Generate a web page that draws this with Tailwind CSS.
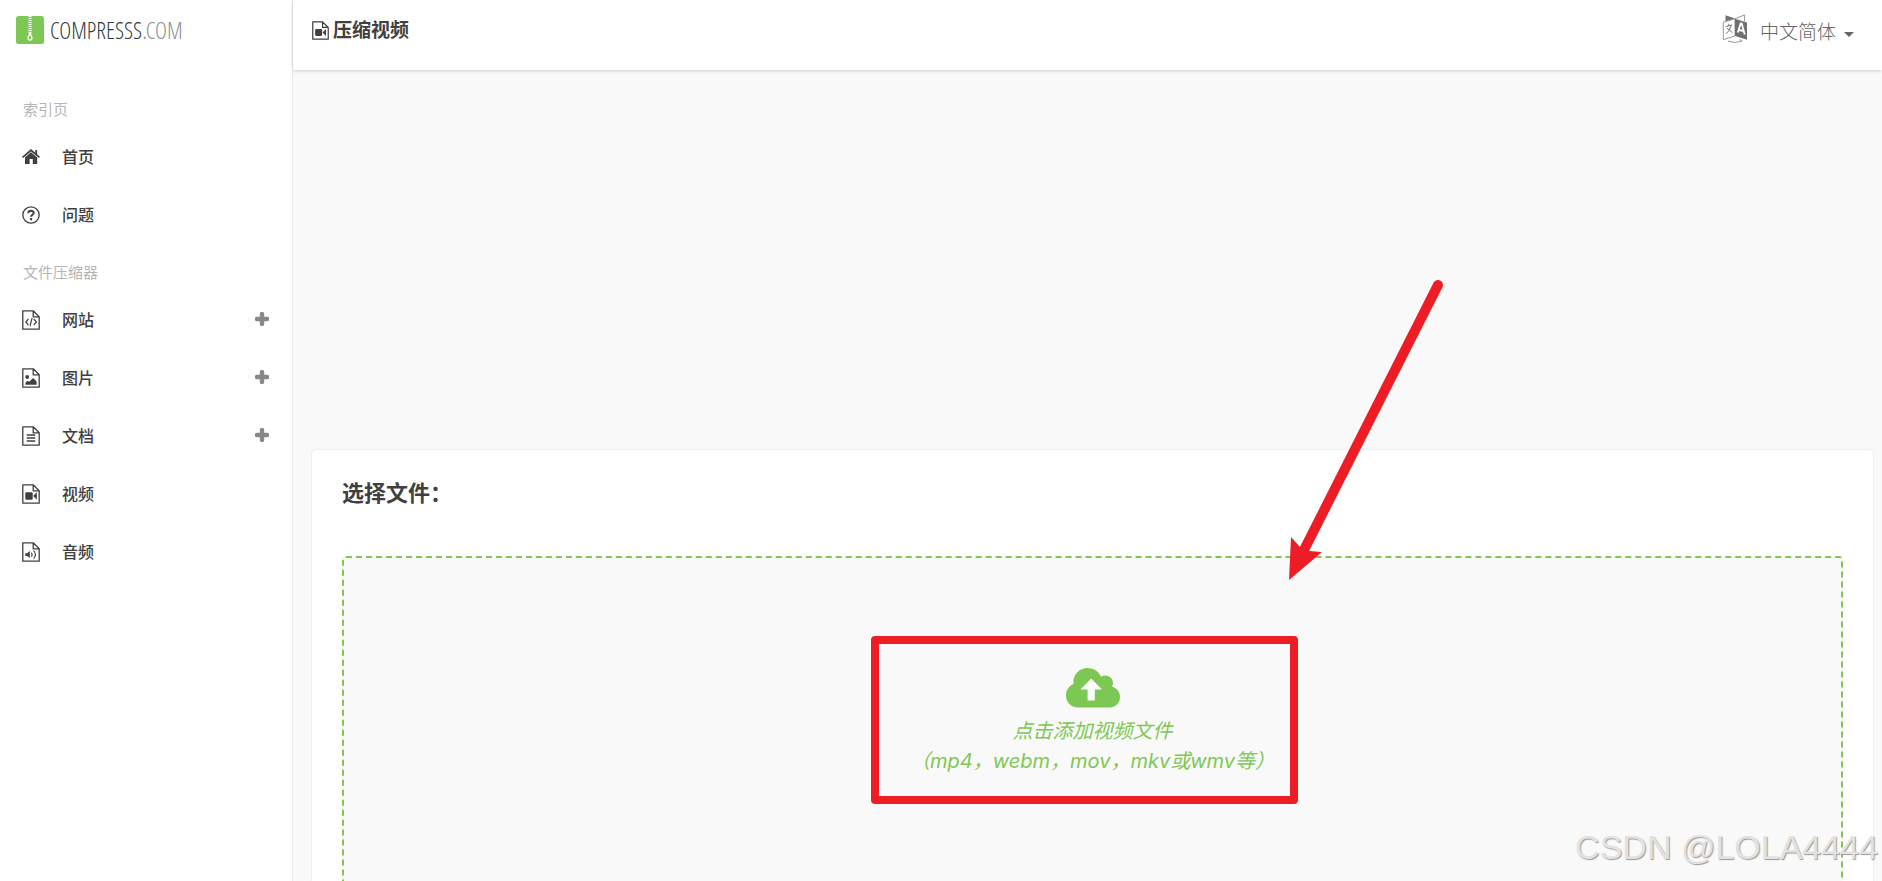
<!DOCTYPE html>
<html lang="zh-CN">
  <head>
    <meta charset="UTF-8" />
    <meta name="viewport" content="width=device-width, initial-scale=1.0" />
    <title>压缩视频 - Compresss.com</title>
    <script src="https://cdn.jsdelivr.net/npm/@tailwindcss/browser@4"></script>
  </head>
  <body class="relative flex h-screen overflow-hidden bg-[#f9f9f9] font-['Noto_Sans','Noto_Sans_CJK_SC',sans-serif] text-[#404040]">
    <!-- Shared icon shapes -->
    <svg class="hidden">
      <symbol id="file" viewBox="0 0 18 20">
        <path d="M.8.8h10.4l6 6v12.4H.8z M11.2.8v6h6" fill="none" stroke="currentColor" stroke-width="1.3" stroke-linejoin="round" />
      </symbol>
      <symbol id="video" viewBox="0 0 18 20">
        <use href="#file" width="18" height="20" />
        <rect x="3.3" y="8.3" width="7.4" height="7.4" rx="1.2" fill="currentColor" />
        <path d="M11.2 12l3.6-3.7v7.4z" fill="currentColor" />
      </symbol>
      <symbol id="plus" viewBox="0 0 14 14">
        <path d="M7 2v10M2 7h10" stroke="currentColor" stroke-width="4.4" stroke-linecap="round" />
      </symbol>
    </svg>

    <!-- Sidebar -->
    <aside class="flex w-[293px] shrink-0 flex-col border-r border-[#ebebeb] bg-white">
      <a href="#" class="flex h-[60px] items-center gap-[6px] px-4">
        <svg class="h-7 w-7 shrink-0" viewBox="0 0 28 28">
          <rect width="28" height="28" rx="2.5" fill="#7dc855" />
          <path d="M12.4 0v18M15.6 0v18" stroke="#b5df9c" stroke-width=".6" />
          <path d="M14 0v18" stroke="#fff" stroke-width="2.6" stroke-dasharray="1 1" />
          <path d="M14 17l-1.8 4.2a2 2 0 1 0 3.6 0z" fill="none" stroke="#fff" stroke-width="1.3" />
        </svg>
        <span class="font-['Open_Sans_Condensed_Light','Liberation_Sans_Narrow','Open_Sans',sans-serif] text-[23px] leading-7 text-[#303a40]">COMPRESSS<span class="font-light text-[#8a8f93]">.COM</span></span>
      </a>

      <nav class="mt-[33px] text-base font-medium">
        <h2 class="mb-[2px] flex h-[33px] items-center px-[23px] text-[15px] font-normal text-[#b5b5b5]">索引页</h2>
        <a href="#" class="flex h-[58px] items-center gap-[22px] px-[22px]">
          <svg class="h-5 w-[18px]" viewBox="0 0 18 20" fill="currentColor">
            <path d="M9 5.2L15.2 10.4V17H10.8V12H7.6V17H3V10.4z" />
            <path d="M.6 10.4L9 3.2l8.5 7.2M14.2 3v4.4" fill="none" stroke="currentColor" stroke-width="1.8" />
          </svg>
          首页
        </a>
        <a href="#" class="flex h-[58px] items-center gap-[22px] px-[22px]">
          <svg class="h-5 w-[18px]" viewBox="0 0 18 20" fill="none" stroke="currentColor">
            <circle cx="9" cy="10" r="8.2" stroke-width="1.3" />
            <path d="M6.3 8.2C6.5 5 11.8 5.2 11.7 8C11.6 9.8 9.1 9.7 9.1 11.8M9.1 13v2.2" stroke-width="2" />
          </svg>
          问题
        </a>
        <h2 class="mt-3 mb-[2px] flex h-[33px] items-center px-[23px] text-[15px] font-normal text-[#b5b5b5]">文件压缩器</h2>
        <button type="button" class="flex h-[58px] w-full items-center gap-[22px] pr-[23px] pl-[22px]">
          <svg class="h-5 w-[18px]" viewBox="0 0 18 20" fill="none" stroke="currentColor" stroke-width="1.2">
            <use href="#file" width="18" height="20" />
            <path d="M6.4 9l-2.6 3 2.6 3M11.8 9l2.6 3-2.6 3M10.1 7.8l-2 8.4" />
          </svg>
          网站
          <svg class="mb-[2px] ml-auto h-[14px] w-[14px] text-[#888]"><use href="#plus" /></svg>
        </button>
        <button type="button" class="flex h-[58px] w-full items-center gap-[22px] pr-[23px] pl-[22px]">
          <svg class="h-5 w-[18px]" viewBox="0 0 18 20" fill="currentColor">
            <use href="#file" width="18" height="20" />
            <circle cx="5.2" cy="9" r="1.9" />
            <path d="M3.5 16.7v-2.2l2-1.7 1.7 1 4-3.8 3.4 3.4v3.3z" />
          </svg>
          图片
          <svg class="mb-[2px] ml-auto h-[14px] w-[14px] text-[#888]"><use href="#plus" /></svg>
        </button>
        <button type="button" class="flex h-[58px] w-full items-center gap-[22px] pr-[23px] pl-[22px]">
          <svg class="h-5 w-[18px]" viewBox="0 0 18 20" fill="none" stroke="currentColor" stroke-width="1.3">
            <use href="#file" width="18" height="20" />
            <path d="M4.7 9h8.6M4.7 12h8.6M4.7 15h8.6" />
          </svg>
          文档
          <svg class="mb-[2px] ml-auto h-[14px] w-[14px] text-[#888]"><use href="#plus" /></svg>
        </button>
        <a href="#" class="flex h-[58px] items-center gap-[22px] px-[22px]">
          <svg class="h-5 w-[18px]"><use href="#video" /></svg>
          视频
        </a>
        <a href="#" class="flex h-[58px] items-center gap-[22px] px-[22px]">
          <svg class="h-5 w-[18px]" viewBox="0 0 18 20" fill="none" stroke="currentColor" stroke-width="1.1">
            <use href="#file" width="18" height="20" />
            <path d="M3.3 11.3h1.8l2.7-2.2v7l-2.7-2.2H3.3z" fill="currentColor" stroke="none" />
            <path d="M9.4 10.6q1.5 2 0 4M11.6 8.7q3.6 3.9 0 7.8" />
          </svg>
          音频
        </a>
      </nav>
    </aside>

    <div class="flex min-w-0 flex-1 flex-col">
      <!-- Top bar -->
      <header class="flex h-[70px] shrink-0 justify-between bg-white pr-7 pl-[19px] shadow-[0_1px_3px_rgba(0,0,0,0.18)]">
        <h1 class="flex h-[60px] items-center gap-1 text-[19px] font-bold">
          <svg class="h-[19px] w-[17px]"><use href="#video" /></svg>
          压缩视频
        </h1>
        <button type="button" class="flex h-16 items-center text-[19px] font-light text-[#666]">
          <svg class="mr-3 mb-[6px] h-[30px] w-[26px]" viewBox="0 0 26 30">
            <path d="M3.5 1.2L13 4.6 3.5 7.6z" fill="#707070" />
            <path d="M13 4.6L22.6 1v6.4M13 4.8L1.3 8.2v17.4L13 22z" fill="none" stroke="#999" />
            <path d="M13 4.8l12 3.6v17.4L13 22z" fill="#707070" />
            <path d="M15.8 18.6l2.9-9.2h1l3 11.2M16.8 16l5 1" fill="none" stroke="#fff" stroke-width="1.8" />
            <path d="M3.7 12.6l6.4-1.7M6.6 9.8l.5 2M9 11.4q-1 5.6-5 8.5M5 14.2l5.5 4.6" fill="none" stroke="#777" />
            <path d="M6 27q7 3 13 0M18 25.5l2 1.2-1.4 1.6" fill="none" stroke="#999" />
          </svg>
          中文简体
          <svg class="mt-1 ml-2 h-[5px] w-[10px]" viewBox="0 0 10 5"><path d="M0 0h10L5 5z" fill="#666" /></svg>
        </button>
      </header>

      <!-- Upload card -->
      <main class="min-h-0 flex-1 pt-[380px] pr-[9px] pl-[19px]">
        <section class="flex h-full flex-col rounded-t bg-white px-[30px] shadow-[0_0_2px_rgba(0,0,0,0.14)]">
          <h2 class="flex h-[84px] shrink-0 items-center text-[22px] font-bold">选择文件：</h2>
          <button type="button" class="mt-[22px] flex h-[340px] shrink-0 flex-col items-center rounded border-2 border-dashed border-[#7dc855] bg-[#f9f9f9] pt-[110px] font-[Inter,'Noto_Sans_CJK_SC',sans-serif] text-xl leading-[30px] text-[#7dc855] italic">
            <svg class="mb-2 h-[40px] w-[54px]" viewBox="0 0 54 40">
              <path d="M12 39.5C5 39.5 0 34 0 27.5C0 22 3 18 7.5 16C6.5 6.5 13.5 0 21.5 0C28 0 33 3.5 35 8.8C40 5.5 47 9 47 15C47 16.5 46.7 17.7 46 18.8C51 20 54 24 54 29C54 35 49.5 39.5 43.5 39.5z" fill="#7dc855" />
              <path d="M25.2 10.5L36 21.5H28.8V32.5H21.6V21.5H14.4z" fill="#fff" />
            </svg>
            <span>点击添加视频文件</span>
            <span>（mp4，webm，mov，mkv或wmv等）</span>
          </button>
        </section>
      </main>
    </div>

    <!-- Annotations over the page -->
    <div class="pointer-events-none absolute top-[636px] left-[871px] h-[168px] w-[427px] rounded border-8 border-[#ee1c25]"></div>
    <svg class="pointer-events-none absolute top-[270px] left-[1280px] h-[320px] w-[170px]" viewBox="0 0 170 320">
      <path d="M158 15L24 280" stroke="#ee1c25" stroke-width="10" stroke-linecap="round" />
      <path d="M9 310L11 267 20 277 29 281 42 282z" fill="#ee1c25" />
    </svg>
    <p class="pointer-events-none absolute right-1 bottom-[10px] font-['Liberation_Sans',sans-serif] text-[34px] leading-[48px] text-[#e2e2e2] [text-shadow:1px_1px_1px_#999]">CSDN @LOLA4444</p>
  </body>
</html>
